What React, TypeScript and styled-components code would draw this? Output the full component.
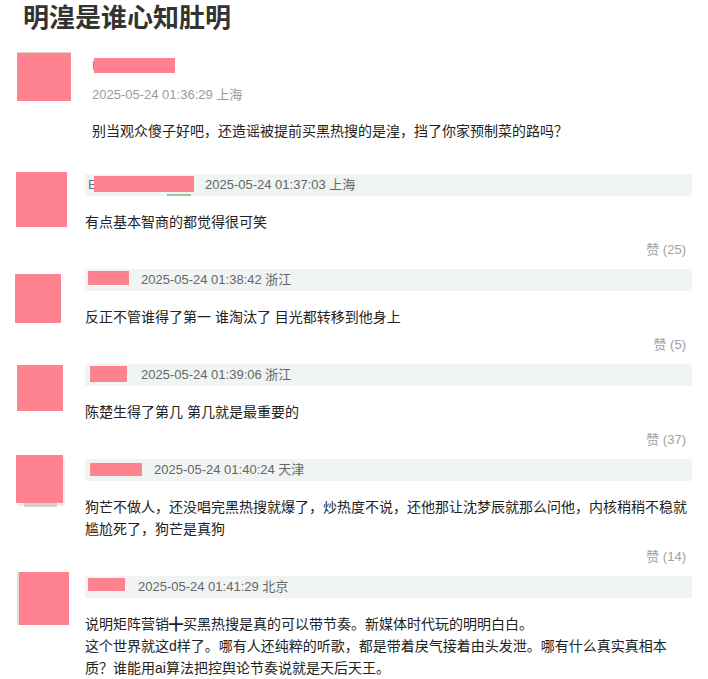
import styled, { createGlobalStyle } from "styled-components";

const GlobalStyle = createGlobalStyle`
  html, body {
    margin: 0;
    padding: 0;
    background: #fff;
  }
  body {
    font-family: "Liberation Sans", "Noto Sans CJK SC", sans-serif;
    color: #222;
  }
`;

type RedactType = { left: number; top: number; w: number; h: number };

type CommentType = {
  avatar: { x: number; top: number; w: number; h: number; variant?: "shadow" | "edge" };
  nameWidth: number;
  letter?: string;
  redact: RedactType;
  badge?: boolean;
  time: string;
  lines: string[];
  likes: number;
};

const comments: CommentType[] = [
  {
    avatar: { x: 16, top: -2, w: 51, h: 55 },
    nameWidth: 117,
    letter: "E",
    redact: { left: 6, top: 2, w: 100, h: 16 },
    badge: true,
    time: "2025-05-24 01:37:03 上海",
    lines: ["有点基本智商的都觉得很可笑"],
    likes: 25,
  },
  {
    avatar: { x: 15, top: 5, w: 46, h: 49 },
    nameWidth: 53,
    redact: { left: 0, top: 2, w: 41, h: 14 },
    time: "2025-05-24 01:38:42 浙江",
    lines: ["反正不管谁得了第一 谁淘汰了 目光都转移到他身上"],
    likes: 5,
  },
  {
    avatar: { x: 17, top: 1, w: 46, h: 46 },
    nameWidth: 53,
    redact: { left: 2, top: 2, w: 37, h: 16 },
    time: "2025-05-24 01:39:06 浙江",
    lines: ["陈楚生得了第几 第几就是最重要的"],
    likes: 37,
  },
  {
    avatar: { x: 16, top: -4, w: 47, h: 48, variant: "shadow" },
    nameWidth: 66,
    redact: { left: 2, top: 4, w: 52, h: 13 },
    time: "2025-05-24 01:40:24 天津",
    lines: [
      "狗芒不做人，还没唱完黑热搜就爆了，炒热度不说，还他那让沈梦辰就那么问他，内核稍稍不稳就尴尬死了，狗芒是真狗",
    ],
    likes: 14,
  },
  {
    avatar: { x: 19, top: -4, w: 50, h: 53, variant: "edge" },
    nameWidth: 50,
    redact: { left: 0, top: 2, w: 37, h: 13 },
    time: "2025-05-24 01:41:29 北京",
    lines: [
      "说明矩阵营销╋买黑热搜是真的可以带节奏。新媒体时代玩的明明白白。",
      "这个世界就这d样了。哪有人还纯粹的听歌，都是带着戾气接着由头发泄。哪有什么真实真相本质？谁能用ai算法把控舆论节奏说就是天后天王。",
    ],
    likes: 0,
  },
];

const App = () => {
  return (
    <Page>
      <GlobalStyle />
      <Title>明湟是谁心知肚明</Title>

      <FirstRow>
        <AvatarCol>
          <Avatar $x={17} $top={0} $w={54} $h={48} $variant="top" />
        </AvatarCol>
        <FirstBody>
          <NameLine>
            <Letter>I</Letter>
            <Redact $left={2} $top={2} $w={81} $h={15} />
          </NameLine>
          <FirstTime>2025-05-24 01:36:29 上海</FirstTime>
          <Content>别当观众傻子好吧，还造谣被提前买黑热搜的是湟，挡了你家预制菜的路吗？</Content>
        </FirstBody>
      </FirstRow>

      {comments.map((c, i) => (
        <Row key={i}>
          <AvatarCol>
            <Avatar
              $x={c.avatar.x}
              $top={c.avatar.top}
              $w={c.avatar.w}
              $h={c.avatar.h}
              $variant={c.avatar.variant}
            />
          </AvatarCol>
          <Body>
            <Header>
              <NameArea $w={c.nameWidth}>
                {c.letter && <Letter>{c.letter}</Letter>}
                <Redact $left={c.redact.left} $top={c.redact.top} $w={c.redact.w} $h={c.redact.h} />
                {c.badge && <Badge />}
              </NameArea>
              <Time>{c.time}</Time>
            </Header>
            <Content>
              {c.lines.map((l, j) => (
                <div key={j}>{l}</div>
              ))}
            </Content>
            {c.likes > 0 && <Like>赞 ({c.likes})</Like>}
          </Body>
        </Row>
      ))}
    </Page>
  );
};

export default App;

const Page = styled.div`
  width: 692px;
  padding: 1px 16px 0 0;
`;

const Title = styled.h1`
  margin: 0 0 18px 23px;
  font-size: 26px;
  line-height: 34px;
  font-weight: 700;
  color: #333;
`;

const FirstRow = styled.div`
  display: flex;
  margin-bottom: 32px;
`;

const Row = styled.div`
  display: flex;
`;

const AvatarCol = styled.div`
  width: 85px;
  flex-shrink: 0;
`;

const Avatar = styled.div<{
  $x: number;
  $top: number;
  $w: number;
  $h: number;
  $variant?: "shadow" | "edge" | "top";
}>`
  position: relative;
  margin-left: ${(p) => p.$x}px;
  margin-top: ${(p) => p.$top}px;
  width: ${(p) => p.$w}px;
  height: ${(p) => p.$h}px;
  background: #ff8291;
  box-shadow: ${(p) =>
    p.$variant === "shadow"
      ? "2px 3px 0 #ececec"
      : p.$variant === "edge"
      ? "-2px 0 0 #e6ddd3"
      : p.$variant === "top"
      ? "0 -1px 0 #e4d6c6"
      : "none"};

  &::after {
    content: "";
    display: ${(p) => (p.$variant === "shadow" ? "block" : "none")};
    position: absolute;
    left: 8px;
    right: 6px;
    bottom: -4px;
    height: 4px;
    background: #cfcfcf;
  }
`;

const FirstBody = styled.div`
  flex: 1;
  padding-left: 7px;
`;

const NameLine = styled.div`
  position: relative;
  height: 20px;
  margin-top: 3px;
  font-size: 13px;
  line-height: 20px;
`;

const FirstTime = styled.div`
  margin-top: 9px;
  font-size: 13px;
  line-height: 20px;
  color: #9a9a9a;
`;

const Body = styled.div`
  width: 607px;
`;

const Header = styled.div`
  display: flex;
  align-items: center;
  height: 22px;
  padding-left: 3px;
  background: #f0f4f3;
`;

const NameArea = styled.div<{ $w: number }>`
  position: relative;
  width: ${(p) => p.$w}px;
  height: 22px;
  flex-shrink: 0;
  font-size: 13px;
  line-height: 22px;
`;

const Letter = styled.span`
  color: #56778e;
  font-size: 13px;
`;

const Redact = styled.span<RedactType>`
  position: absolute;
  left: ${(p) => p.$left}px;
  top: ${(p) => p.$top}px;
  width: ${(p) => p.$w}px;
  height: ${(p) => p.$h}px;
  background: #ff8291;
`;

const Badge = styled.span`
  position: absolute;
  left: 79px;
  top: 20px;
  width: 24px;
  height: 2px;
  background: #9cc79a;
`;

const Time = styled.span`
  font-size: 13px;
  line-height: 22px;
  color: #666;
  white-space: nowrap;
`;

const Content = styled.div`
  margin-top: 15px;
  font-size: 14px;
  line-height: 22px;
  color: #222;
`;

const Like = styled.div`
  margin: 6px 0 9px;
  padding-right: 6px;
  text-align: right;
  font-size: 13px;
  line-height: 21px;
  color: #a0a0a0;
`;
